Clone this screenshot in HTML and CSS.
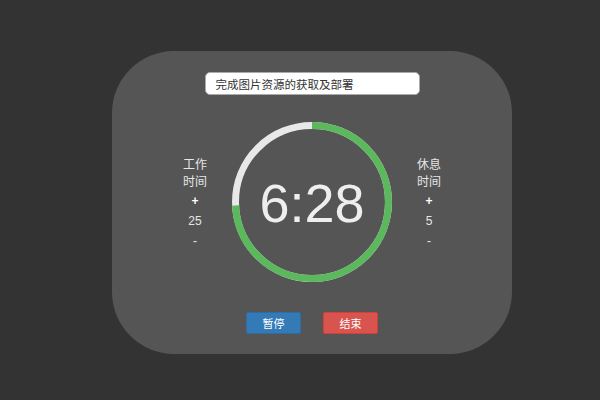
FILE: index.html
```html
<!DOCTYPE html>
<html>
<head>
<meta charset="utf-8">
<link rel="stylesheet" href="styles.css">
</head>
<body>
<div class="card">
  <div class="task-row">
    <input class="task" type="text" value="完成图片资源的获取及部署">
  </div>
  <div class="middle">
    <div class="side">
      <div class="label">工作<br>时间</div>
      <div class="ctl plus">+</div>
      <div class="ctl">25</div>
      <div class="ctl">-</div>
    </div>
    <div class="dial">
      <svg class="ring" width="160" height="160" viewBox="0 0 160 160">
        <circle cx="80" cy="80" r="76.5" fill="none" stroke="#e8e8e8" stroke-width="7"/>
        <circle cx="80" cy="80" r="76.5" fill="none" stroke="#5cb85c" stroke-width="7" stroke-dasharray="356.3 480.7" transform="rotate(-90 80 80)"/>
      </svg>
      <div class="time">6:28</div>
    </div>
    <div class="side">
      <div class="label">休息<br>时间</div>
      <div class="ctl plus">+</div>
      <div class="ctl">5</div>
      <div class="ctl">-</div>
    </div>
  </div>
  <div class="buttons">
    <button class="btn btn-pause">暂停</button>
    <button class="btn btn-stop">结束</button>
  </div>
</div>
</body>
</html>
```
FILE: styles.css
```css
html, body {
  margin: 0;
  padding: 0;
  background: #333333;
  font-family: "Liberation Sans", "Noto Sans CJK SC", sans-serif;
}
.card {
  box-sizing: border-box;
  width: 400px;
  height: 303px;
  margin: 51px 0 0 112px;
  background: #555555;
  border-radius: 62px;
  padding-top: 21px;
  display: flex;
  flex-direction: column;
  align-items: center;
}
.task-row {
  display: flex;
  justify-content: center;
}
.task {
  box-sizing: border-box;
  width: 215px;
  height: 23px;
  border: 1px solid #aaa;
  border-radius: 5px;
  background: #fff;
  padding: 0 10px;
  font-family: "Liberation Sans", "Noto Sans CJK SC", sans-serif;
  font-size: 11.5px;
  color: #333;
  outline: none;
}
.middle {
  margin-top: 27px;
  display: flex;
  align-items: center;
  gap: 17px;
}
.side {
  width: 40px;
  display: flex;
  flex-direction: column;
  align-items: center;
  color: #e6e6e6;
  font-size: 12px;
  font-family: "Liberation Sans", "Noto Sans CJK SC", sans-serif;
  padding-top: 3px;
}
.label {
  text-align: center;
  line-height: 17px;
}
.ctl {
  height: 20px;
  line-height: 20px;
}
.plus {
  font-weight: bold;
  color: #fff;
}
.dial {
  display: grid;
  width: 160px;
  height: 160px;
}
.ring, .time {
  grid-area: 1 / 1;
}
.time {
  align-self: center;
  justify-self: center;
  font-size: 54px;
  color: #eeeeee;
  font-family: "Liberation Sans", sans-serif;
  margin-top: 2px;
}
.buttons {
  margin-top: 30px;
  display: flex;
  gap: 22px;
}
.btn {
  width: 55px;
  height: 22px;
  border: 1px solid transparent;
  border-radius: 2px;
  color: #fff;
  font-size: 11px;
  font-family: "Liberation Sans", "Noto Sans CJK SC", sans-serif;
  padding: 0;
}
.btn-pause {
  background: #337ab7;
  border-color: #2e6da4;
}
.btn-stop {
  background: #d9534f;
  border-color: #d43f3a;
}
```
